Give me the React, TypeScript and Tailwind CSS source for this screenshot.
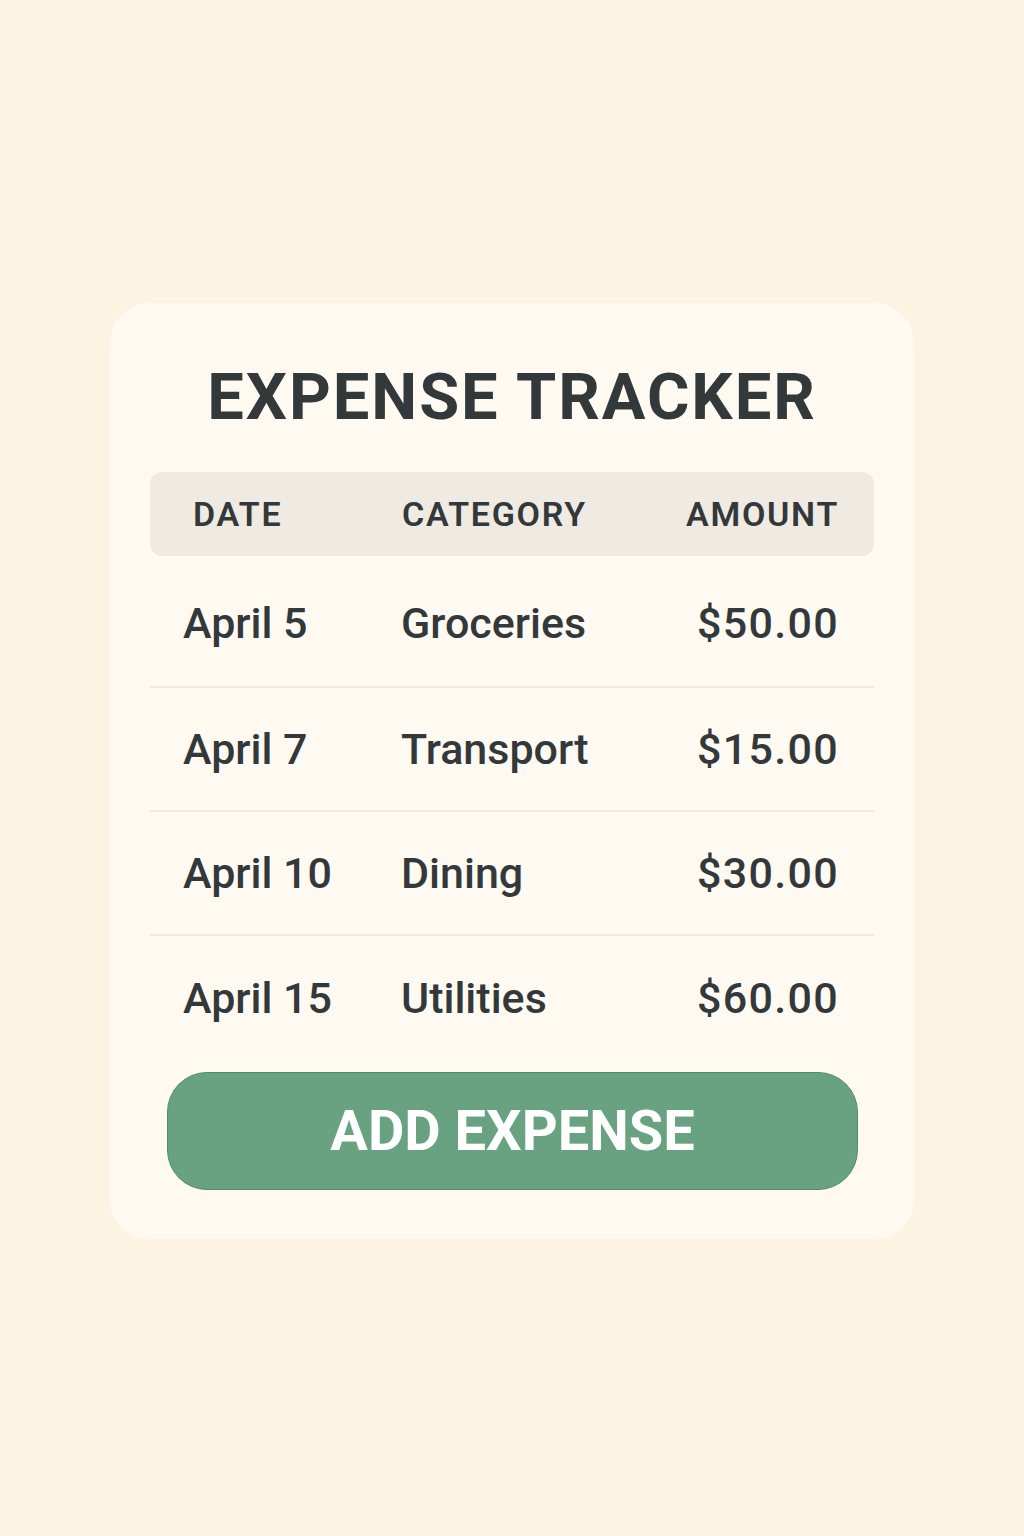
const expenses = [
  { date: 'April 5', category: 'Groceries', amount: '$50.00' },
  { date: 'April 7', category: 'Transport', amount: '$15.00' },
  { date: 'April 10', category: 'Dining', amount: '$30.00' },
  { date: 'April 15', category: 'Utilities', amount: '$60.00' },
];

export default function App() {
  return (
    <div
      className="min-h-[1536px] w-full bg-[#fdf3e3] pt-[303px] text-[#33383a]"
      style={{ fontFamily: 'Roboto, "Liberation Sans", sans-serif' }}
    >
      <div className="mx-auto w-[804px] rounded-[40px] bg-[#fefaf2] px-10 pb-[49px] pt-[62px]">
        <h1 className="text-center text-[65px] font-bold leading-none tracking-[0.03em]">
          EXPENSE TRACKER
        </h1>

        <div className="mt-[42px] grid h-[84px] grid-cols-[209px_1fr_auto] items-center rounded-xl bg-[#efebe2] pl-[43px] pr-[35px] text-[34px] font-semibold tracking-[0.05em]">
          <span>DATE</span>
          <span>CATEGORY</span>
          <span>AMOUNT</span>
        </div>

        <div>
          {expenses.map((e, i) => (
            <div
              key={e.date}
              className={
                'grid grid-cols-[218px_1fr_auto] items-center pl-[33px] pr-[35px] text-[43px] font-medium ' +
                (i === 0 ? 'h-[132px] pt-[4px] ' : 'h-[124px] ') +
                (i < expenses.length - 1 ? 'border-b-2 border-[#eeeae1]' : '')
              }
            >
              <span>{e.date}</span>
              <span>{e.category}</span>
              <span className="text-right tracking-[0.03em]">{e.amount}</span>
            </div>
          ))}
        </div>

        <button className="mx-[17px] mt-3 flex h-[118px] w-[691px] items-center justify-center rounded-[40px] border border-[#4f8d69] bg-[#68a281] text-[56px] font-bold text-white">
          ADD EXPENSE
        </button>
      </div>
    </div>
  );
}
